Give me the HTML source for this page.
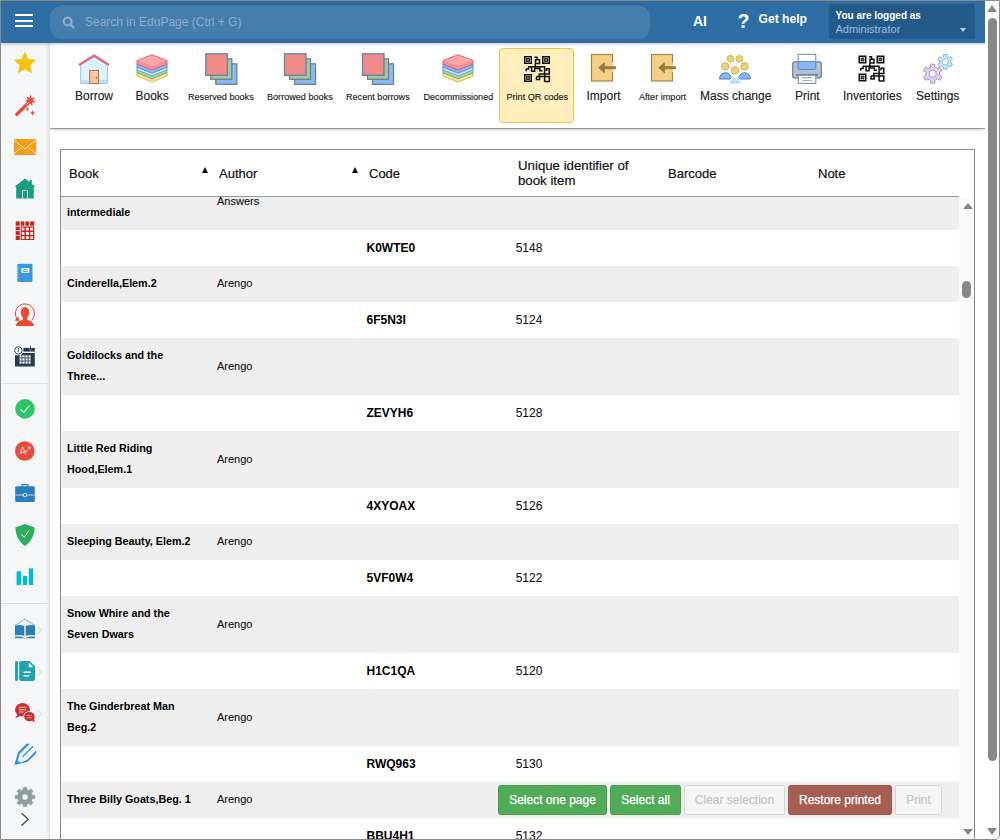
<!DOCTYPE html>
<html><head><meta charset="utf-8">
<style>
*{box-sizing:border-box;margin:0;padding:0}
html,body{width:1000px;height:840px;overflow:hidden;background:#fff;font-family:"Liberation Sans",sans-serif;color:#222}
.a{position:absolute}
#frame{position:absolute;left:0;top:0;width:1000px;height:840px;overflow:hidden;background:#fff}
#bord{position:absolute;left:0;top:0;width:1000px;height:840px;border:1px solid #8a8a8a;border-bottom-right-radius:5px;pointer-events:none;z-index:50}
#hdr{left:1px;top:1px;width:984px;height:42px;background:#2e6ea5;z-index:8;box-shadow:0 1px 3px rgba(0,0,0,.25)}
#search{left:49px;top:4px;width:600px;height:34px;border-radius:12px;background:#457eac;box-shadow:0 -1px 0 rgba(0,0,0,.13)}
#search .ph{position:absolute;left:35px;top:10px;font-size:12px;color:#8cadcc;white-space:nowrap;line-height:14px}
#login{left:828px;top:3px;width:146px;height:35px;border-radius:3px;background:#245a89}
#side{left:1px;top:43px;width:49px;height:800px;background:linear-gradient(to right,#f5f6f8 0,#f5f6f8 44px,#eef0f2 46px,#e6e7ea 48px,#dedfe2 49px);z-index:3}
#tool{left:50px;top:43px;width:935px;height:85px;background:#fff;box-shadow:0 1px 1px rgba(0,0,0,.28),0 1px 4px rgba(0,0,0,.25);z-index:2}
.lbl span{top:0}
.lbl span.s{font-size:9.1px;top:1px}
#vs{left:985px;top:1px;width:14px;height:838px;background:#fff;z-index:9}
#tbl{left:60px;top:149px;width:915px;height:700px;border:1px solid #8a8a8a;border-bottom:none;background:#fff;overflow:hidden}
.th{position:absolute;font-size:13px;color:#111;-webkit-text-stroke:0.2px #111;line-height:15px;white-space:nowrap}
.sort{position:absolute;width:0;height:0;border-left:3.5px solid transparent;border-right:3.5px solid transparent;border-bottom:6px solid #111}
#body{position:absolute;left:0;top:47px;width:898px;height:660px;overflow:hidden}
.row{position:absolute;left:0;width:898px;font-size:11px;color:#111;-webkit-text-stroke:0.1px #111}
.row.g{background:#eeeeee}
.c{position:absolute;white-space:nowrap;line-height:21px}
.bk{font-weight:bold;font-size:10.75px;color:#000;-webkit-text-stroke:0}
.cd{font-weight:bold;font-size:12px;color:#000;-webkit-text-stroke:0}
.ud{font-size:12px;-webkit-text-stroke:0.08px #111}
.btn{position:absolute;top:3px;height:30px;border-radius:2.5px;font-size:12px;line-height:28px;text-align:center;border:1px solid;white-space:nowrap;-webkit-text-stroke:0.25px currentColor}
</style></head><body>
<div id="frame">
 <div id="hdr" class="a">
  <div class="a" style="left:14px;top:13px;width:18px;height:2px;background:#fff"></div>
  <div class="a" style="left:14px;top:19px;width:18px;height:2px;background:#fff"></div>
  <div class="a" style="left:14px;top:24px;width:18px;height:2px;background:#fff"></div>
  <div id="search" class="a">
   <svg class="a" style="left:11.5px;top:10.5px" width="14" height="14" viewBox="0 0 14 14"><circle cx="5.6" cy="5.6" r="3.9" fill="none" stroke="#8cadcc" stroke-width="2.2"/><path d="M8.5 8.5 L11.6 11.6" stroke="#8cadcc" stroke-width="2.4" stroke-linecap="round"/></svg>
   <div class="ph">Search in EduPage (Ctrl + G)</div>
  </div>
  <div class="a" style="left:692px;top:12px;font-size:14px;font-weight:bold;color:#fff;line-height:16px">AI</div>
  <div class="a" style="left:736.5px;top:9.5px;font-size:19.5px;font-weight:bold;color:#fff;line-height:21px">?</div>
  <div class="a" style="left:757.5px;top:11px;font-size:12.1px;font-weight:bold;color:#fff;line-height:14px">Get help</div>
  <div id="login" class="a">
   <div class="a" style="left:6.5px;top:5px;font-size:10px;font-weight:bold;color:#fff;white-space:nowrap;line-height:13px">You are logged as</div>
   <div class="a" style="left:6.5px;top:19px;font-size:11px;color:#9dbde0;white-space:nowrap;line-height:13px">Administrator</div>
   <div class="a" style="left:131px;top:24px;width:0;height:0;border-left:3.8px solid transparent;border-right:3.8px solid transparent;border-top:4.2px solid #c8cdd2"></div>
  </div>
 </div>
 <div id="side" class="a">
  <div class="a" style="left:0;top:340px;width:48px;height:1px;background:#dcdfe3"></div>
  <div class="a" style="left:0;top:560px;width:48px;height:1px;background:#dcdfe3"></div>
 </div>
 <svg class="a" style="left:0;top:0;z-index:6" width="50" height="840" viewBox="0 0 50 840">
  <!-- star -->
  <polygon points="25.0,52.3 28.1,59.3 35.7,60.1 30.0,65.2 31.6,72.7 25.0,68.9 18.4,72.7 20.0,65.2 14.3,60.1 21.9,59.3" fill="#f3c313" stroke="#f3c313" stroke-width="0.6" stroke-linejoin="round"/>
  <!-- wand -->
  <g fill="#e74c3c">
   <path d="M15.6,113.2 L27.6,101.2 L30,103.6 L18,115.6 A1.7,1.7 0 0 1 15.6,113.2 Z"/>
   <polygon points="30.6,94.6 31.6,98 35,97.2 32.8,99.9 35.8,102 32.2,102.4 32.6,106 30.1,103.6 27.6,105.6 28,102.1 24.6,101 27.9,99.5 26.2,96.4 29.5,97.7"/>
   <polygon points="27.4,106.6 28.1,108.5 30.1,109 28.1,109.6 27.4,111.5 26.7,109.6 24.7,109 26.7,108.5"/>
   <polygon points="32.6,110.2 33.4,112.3 35.6,113 33.4,113.7 32.6,115.8 31.8,113.7 29.6,113 31.8,112.3"/>
  </g>
  <path d="M26.6,104.6 L28.8,102.4" stroke="#fff" stroke-width="0.9"/>
  <!-- mail -->
  <rect x="14" y="139" width="22" height="16" fill="#f29e18"/>
  <path d="M14,140 L25,148.8 L36,140 M14,154 L21.5,147.5 M36,154 L28.5,147.5" fill="none" stroke="#fde9c8" stroke-width="1"/>
  <!-- home -->
  <path d="M14.6,186.8 L25,178.6 L29.5,182.1 V179.9 H31.8 V183.9 L35.5,186.8 H33.8 V198.6 H27.9 V190.2 H22.1 V198.6 H16.2 V186.8 Z" fill="#1a9e82"/>
  <rect x="23" y="191" width="4" height="7.6" fill="#1a9e82"/>
  <!-- grid -->
  <g fill="#c1281e">
   <rect x="15.7" y="221.4" width="4.1" height="4.3"/><rect x="20.7" y="221.4" width="3.7" height="4.3"/><rect x="25.3" y="221.4" width="3.8" height="4.3"/><rect x="30" y="221.4" width="4.3" height="4.3"/>
   <rect x="15.7" y="226.6" width="4.1" height="3.6"/><rect x="15.7" y="231.1" width="4.1" height="3.8"/><rect x="15.7" y="235.8" width="4.1" height="4.2"/>
   <path fill-rule="evenodd" d="M20.7,226.6 H34.3 V240 H20.7 Z M21.8,227.7 V230.4 H24.4 V227.7 Z M25.9,227.7 V230.4 H28.9 V227.7 Z M30.3,227.7 V230.4 H33.1 V227.7 Z M21.8,232 V234.9 H24.4 V232 Z M25.9,232 V234.9 H28.9 V232 Z M30.3,232 V234.9 H33.1 V232 Z M21.8,236.3 V239 H24.4 V236.3 Z M25.9,236.3 V239 H28.9 V236.3 Z M30.3,236.3 V239 H33.1 V236.3 Z"/>
  </g>
  <!-- notebook -->
  <rect x="17.2" y="263.7" width="15.3" height="18.2" rx="1.3" fill="#3a98dc"/>
  <rect x="21.4" y="268" width="7.9" height="4.8" fill="#fff"/>
  <rect x="22.8" y="269.2" width="5" height="0.9" fill="#3a98dc"/><rect x="22.8" y="271" width="5" height="0.9" fill="#3a98dc"/>
  <path d="M16.2,267.5 h2 M16.2,270 h2 M16.2,272.5 h2 M16.2,275 h2 M16.2,277.5 h2" stroke="#fff" stroke-width="0.8"/>
  <!-- person -->
  <g fill="#e84a3a">
   <ellipse cx="25" cy="312.4" rx="4.3" ry="5.4"/>
   <rect x="22.9" y="316" width="4.2" height="5"/>
   <path d="M16,325.9 C16.4,322.4 19.5,320.5 23,320.1 H27 C30.5,320.5 33.6,322.4 34,325.9 Z"/>
   <polygon points="14.6,320.4 19.6,320.9 18.3,316.6"/>
  </g>
  <path d="M16.8,318.6 A9.6,9.6 0 1 1 31.6,320.4" fill="none" stroke="#e84a3a" stroke-width="1"/>
  <!-- calendar -->
  <g fill="#263a50">
   <rect x="23.4" y="347.9" width="11.4" height="3.7"/>
   <path d="M15,355.2 H21 L22.6,353.1 H34.8 V366.6 H15 Z"/>
  </g>
  <rect x="19.3" y="355" width="11.6" height="9" fill="#66758a"/>
  <g fill="#fff">
   <rect x="19.6" y="355.5" width="1.7" height="1.7"/><rect x="22.6" y="355.5" width="1.7" height="1.7"/><rect x="25.7" y="355.5" width="1.7" height="1.7"/><rect x="28.8" y="355.5" width="1.7" height="1.7"/>
   <rect x="19.6" y="358.6" width="1.7" height="1.7"/><rect x="22.6" y="358.6" width="1.7" height="1.7"/><rect x="25.7" y="358.6" width="1.7" height="1.7"/><rect x="28.8" y="358.6" width="1.7" height="1.7"/>
   <rect x="19.6" y="361.7" width="1.7" height="1.7"/><rect x="22.6" y="361.7" width="1.7" height="1.7"/><rect x="25.7" y="361.7" width="1.7" height="1.7"/><rect x="28.8" y="361.7" width="1.7" height="1.7"/>
  </g>
  <rect x="29.8" y="346.3" width="1.4" height="4.2" fill="#fff"/>
  <rect x="30" y="346.3" width="1" height="3.8" fill="#263a50"/>
  <circle cx="18.4" cy="350.4" r="4.6" fill="#f4f5f8"/>
  <circle cx="18.4" cy="350.4" r="3.7" fill="#fff" stroke="#263a50" stroke-width="0.9"/>
  <path d="M18.6,347.8 V351.4 H17.4" fill="none" stroke="#263a50" stroke-width="0.8"/>
  <!-- check badge -->
  <circle cx="25" cy="408.9" r="9.8" fill="#2ec46a"/>
  <path d="M20.5,409.5 L23.8,412.5 L29.5,405.5" fill="none" stroke="#e8f8ee" stroke-width="1.1"/>
  <!-- A+ -->
  <circle cx="24.8" cy="451" r="9.8" fill="#e84c3d"/>
  <path d="M20.6,453.6 C21.2,450.5 21.8,448 22.6,446.8 C23.6,448.8 24.6,451.5 25.6,454.4 M20.2,453.2 C22.5,452.3 25,451.4 27.4,450.8 M28.2,448 l2.4,-0.2 M29.3,446.6 l0.2,2.6" fill="none" stroke="#fce4e1" stroke-width="0.95" stroke-linecap="round"/>
  <!-- briefcase -->
  <rect x="15.2" y="486.2" width="19.6" height="15.7" rx="1.2" fill="#2a7fbb"/>
  <path d="M22.2,486.5 V484.6 H27.8 V486.5" fill="none" stroke="#2a7fbb" stroke-width="1.3"/>
  <rect x="15.2" y="494.4" width="19.6" height="1.4" fill="#8ab9dc"/>
  <circle cx="25" cy="495" r="1.8" fill="#2a7fbb" stroke="#fff" stroke-width="0.8"/>
  <!-- shield -->
  <path d="M25,523.9 L34.6,527.5 C34.6,535 31,542 25,545.9 C19,542 15.4,535 15.4,527.5 Z" fill="#2aaf5f"/>
  <path d="M21.2,534.3 L24.4,537.2 L28.8,530.5" fill="none" stroke="#d9f3e2" stroke-width="1"/>
  <!-- chart -->
  <g fill="#00bcd4"><rect x="16.6" y="571.3" width="4.6" height="13.7"/><rect x="22.9" y="575.9" width="4.2" height="9.1"/><rect x="28.8" y="568.4" width="4.4" height="16.6"/></g>
  <!-- book -->
  <path d="M14.8,625.5 L24.9,619.2 L35,625.5" fill="none" stroke="#2a7fbb" stroke-width="0.9" stroke-dasharray="1.2,0.6"/>
  <path d="M15,625.5 C18,624.6 21.5,624.6 24.2,626 V636 C21.5,634.8 18,634.8 15,635.5 Z M25.6,626 C28.5,624.6 32,624.6 35,625.5 V635.5 C32,634.8 28.5,634.8 25.6,636 Z" fill="#2a7fbb"/>
  <path d="M15,636.8 C18,636 22,636.3 25,638.3 C28,636.3 32,636 35,636.8 V638.3 H15 Z" fill="#2a7fbb"/>
  <path d="M37.5,626.3 L41.5,630 L37.5,633.7" fill="none" stroke="#d3d3d3" stroke-width="0.9"/>
  <!-- doc -->
  <rect x="15.1" y="661" width="2.8" height="19.9" rx="1.2" fill="#20a3ad"/>
  <path d="M21,661 H29.7 L35.1,666.4 V679.1 A1.8,1.8 0 0 1 33.3,680.9 H21 A1.8,1.8 0 0 1 19.2,679.1 V662.8 A1.8,1.8 0 0 1 21,661 Z" fill="#20a3ad"/>
  <path d="M28.8,662.5 L33.2,667.2 H28.8 Z" fill="#fff"/>
  <rect x="23.3" y="671.5" width="7.8" height="1.5" rx="0.7" fill="#fff"/><rect x="23.3" y="675" width="6" height="1.5" rx="0.7" fill="#fff"/>
  <path d="M37.5,668.3 L41.5,672 L37.5,675.7" fill="none" stroke="#d3d3d3" stroke-width="0.9"/>
  <!-- chat -->
  <g fill="#c9302c">
   <ellipse cx="22.5" cy="709.8" rx="7.5" ry="6.7"/>
   <polygon points="15,718.2 18.6,713.6 21.6,715.6"/>
  </g>
  <ellipse cx="29.4" cy="716.6" rx="6.2" ry="5.5" fill="#f5f6f8"/>
  <g fill="#c9302c">
   <ellipse cx="29.4" cy="716.6" rx="5.3" ry="4.7"/>
   <polygon points="34.6,722.6 30.8,719.6 33.6,717.4"/>
  </g>
  <path d="M19,707.3 h7.3 M19,709.7 h7.3 M19,712 h4.6" stroke="#f0c9c7" stroke-width="1"/>
  <path d="M26.5,715.5 h5.6 M26.5,717.8 h5.6" stroke="#e2908c" stroke-width="0.9"/>
  <path d="M37.5,710.3 L41.5,714 L37.5,717.7" fill="none" stroke="#d3d3d3" stroke-width="0.9"/>
  <!-- pencil -->
  <path d="M14.2,765.1 L18.2,752 L26.5,743.7 H30 L19.8,754 L17.8,760.8 L20.3,762.6 L27,760 L36.1,750.2 V753.6 L27.5,762 Z" fill="#3a95dc"/>
  <path d="M22.6,756.8 L33.2,746.2" stroke="#3a95dc" stroke-width="1.4"/>
  <!-- gear -->
  <path fill="#8d9c9c" fill-rule="evenodd" stroke="#8d9c9c" stroke-width="0.4" stroke-linejoin="round" d="M23.20,789.62 L23.24,787.16 L26.76,787.16 L26.80,789.62 L28.95,790.50 L30.72,788.80 L33.20,791.28 L31.50,793.05 L32.38,795.20 L34.84,795.24 L34.84,798.76 L32.38,798.80 L31.50,800.95 L33.20,802.72 L30.72,805.20 L28.95,803.50 L26.80,804.38 L26.76,806.84 L23.24,806.84 L23.20,804.38 L21.05,803.50 L19.28,805.20 L16.80,802.72 L18.50,800.95 L17.62,798.80 L15.16,798.76 L15.16,795.24 L17.62,795.20 L18.50,793.05 L16.80,791.28 L19.28,788.80 L21.05,790.50 Z M28.00,797.00 a3.00,3.00 0 1 0 -6.00,0 a3.00,3.00 0 1 0 6.00,0 Z"/>
  <path d="M21.5,813.2 L28.3,819.3 L21.5,825.5" fill="none" stroke="#333" stroke-width="1.1"/>
 </svg>
 <div id="tool" class="a">
  <div class="a" style="left:449px;top:5px;width:75px;height:75px;border:1px solid #efc04a;border-radius:4px;background:#fdeebb"></div>
 </div>
 <svg class="a" style="left:0;top:0;z-index:6" width="1000" height="130" viewBox="0 0 1000 130">
  <defs>
   <g id="stack">
    <polygon points="137,72.5 152,66.8 167,72.5 167,76 152,82 137,76" fill="#fde68e" stroke="#d8b44a" stroke-width="1"/>
    <polygon points="137,69.3 152,63.6 167,69.3 167,72.8 152,78.8 137,72.8" fill="#a9d7a7" stroke="#6fa870" stroke-width="1"/>
    <polygon points="137,66.5 152,60.8 167,66.5 167,70 152,76 137,70" fill="#bfe6fd" stroke="#6d9fdc" stroke-width="1"/>
    <polygon points="137,63.6 152,57.9 167,63.6 167,67.1 152,73.1 137,67.1" fill="#87b6f2" stroke="#5f8fd8" stroke-width="1"/>
    <polygon points="137,60.5 152,54.8 167,60.5 167,64 152,70 137,64" fill="#f58f96" stroke="#d9646d" stroke-width="1"/>
    <polygon points="137.8,60.5 152,55.5 166.2,60.5 152,66" fill="#f9a7ab"/>
   </g>
   <g id="squares">
    <rect x="215.8" y="63.8" width="21" height="20.5" fill="#8cb9f4" stroke="#6b8197" stroke-width="1.3"/>
    <rect x="210.8" y="58.8" width="21" height="20.5" fill="#a0c99b" stroke="#6b8197" stroke-width="1.3"/>
    <rect x="205.8" y="53.8" width="21.5" height="21.5" fill="#f08b8b" stroke="#6b8197" stroke-width="1.3"/>
   </g>
   <g id="qr" fill="none" stroke="#111" stroke-width="1.7">
    <rect x="524.75" y="56.75" width="6.5" height="6.5" stroke-width="1.5"/><rect x="526.60" y="58.60" width="2.8" height="2.8" fill="#7a7a7a" stroke-width="0.9"/>
    <rect x="542.75" y="56.75" width="6.5" height="6.5" stroke-width="1.5"/><rect x="544.60" y="58.60" width="2.8" height="2.8" fill="#7a7a7a" stroke-width="0.9"/>
    <rect x="524.75" y="74.75" width="6.5" height="6.5" stroke-width="1.5"/><rect x="526.60" y="76.60" width="2.8" height="2.8" fill="#7a7a7a" stroke-width="0.9"/>
    <path stroke-width="1.5" d="M534.5,57.3 h2.5 v2 M535.5,59.8 h4 v3.6 h-4 z M535.3,63.4 v3.3 M528.1,66.7 h16.5 v15 M526.2,71.2 v-2.2 h2.4 v-2.3 M531.5,66.7 v4.5 h3.1 v-4.5 M535.2,66.7 v1.7 h4.7 v2.4 h2.6 M546.5,71 v-2.3 h2.8 v5.2 h-10 v2.5 M536.5,76.4 h12.8 v5 h-4.7 M536.5,76.4 v3.2 h3.1 v-3.2"/>
   </g>
   <g id="imp">
    <rect x="591.5" y="54.5" width="21" height="26.5" fill="#f5cf86" stroke="#a0803f" stroke-width="1.1"/>
    <rect x="611.9" y="62.5" width="1.2" height="10" fill="#f5cf86"/>
    <polygon points="598.2,67.7 604.8,61.9 604.8,73.4" fill="#957a40"/>
    <rect x="603.5" y="66.2" width="12.4" height="3" fill="#957a40"/>
   </g>
  </defs>
  <!-- Borrow -->
  <polygon points="80.7,64.2 94,56.3 107.3,64.2 107.3,83.5 80.7,83.5" fill="#dcf2fd" stroke="#a3c1e6" stroke-width="1"/>
  <rect x="81.2" y="80" width="25.6" height="3" fill="#bde0f6"/>
  <polyline points="79,65 94,55.7 109,65" fill="none" stroke="#e06a74" stroke-width="2.3"/>
  <rect x="89.7" y="70.5" width="8.8" height="13" fill="#ffc59a" stroke="#a9744f" stroke-width="1"/>
  <circle cx="96.3" cy="77.8" r="0.7" fill="#7a4a2a"/>
  <!-- Books -->
  <use href="#stack"/>
  <use href="#squares"/>
  <use href="#squares" transform="translate(78.7,0)"/>
  <use href="#squares" transform="translate(156.7,0)"/>
  <use href="#stack" transform="translate(306,0)"/>
  <use href="#qr"/>
  <use href="#imp"/>
  <use href="#imp" transform="translate(60,0)"/>
  <!-- Mass change -->
  <g stroke="#c8a94a" stroke-width="0.8" fill="#ead27a">
   <circle cx="730.5" cy="58.8" r="3.4"/><circle cx="739.4" cy="58.8" r="3.4"/>
   <circle cx="725.2" cy="66.4" r="3.8"/><circle cx="744.5" cy="66.4" r="3.8"/>
   <circle cx="735" cy="70.5" r="3.8"/>
  </g>
  <path d="M719.5,79 a5.9,6.3 0 0 1 11.8,0 z" fill="#8ab5ee" stroke="#4f7fc8" stroke-width="1"/>
  <path d="M738.7,79 a5.9,6.3 0 0 1 11.8,0 z" fill="#8ab5ee" stroke="#4f7fc8" stroke-width="1"/>
  <path d="M729.3,82.8 a5.7,5.8 0 0 1 11.4,0 z" fill="#c0e6fd" stroke="#fff" stroke-width="1"/>
  <path d="M729.5,82.8 h11" stroke="#9fc4e6" stroke-width="1"/>
  <!-- Print -->
  <rect x="798.2" y="54.3" width="17.6" height="8" fill="#fff" stroke="#74879a" stroke-width="1"/>
  <rect x="792.7" y="61.8" width="28.6" height="16" rx="2" fill="#b1c1d4" stroke="#6d8095" stroke-width="1.2"/>
  <rect x="798.2" y="61.5" width="17.6" height="8" rx="1" fill="#8ab6f0" stroke="#5d87c8" stroke-width="1"/>
  <circle cx="818.7" cy="65.7" r="0.9" fill="#f6dc6a"/>
  <rect x="796" y="74" width="22" height="2" rx="1" fill="#6d8095"/>
  <rect x="798.2" y="75.2" width="17.6" height="8.2" fill="#fff" stroke="#74879a" stroke-width="1"/>
  <rect x="802" y="77" width="10" height="1.3" fill="#a3b2c0"/><rect x="802" y="80" width="10" height="1" fill="#a3b2c0"/>
  <use href="#qr" transform="translate(334.5,-0.5)"/>
  <!-- Settings -->
  <path fill="#ddd2f1" stroke="#a48ac6" stroke-width="0.9" stroke-linejoin="round" fill-rule="evenodd" d="M930.61,67.02 L930.58,64.23 L934.82,64.23 L934.79,67.02 L937.44,68.55 L939.84,67.13 L941.96,70.80 L939.53,72.17 L939.53,75.23 L941.96,76.60 L939.84,80.27 L937.44,78.85 L934.79,80.38 L934.82,83.17 L930.58,83.17 L930.61,80.38 L927.96,78.85 L925.56,80.27 L923.44,76.60 L925.87,75.23 L925.87,72.17 L923.44,70.80 L925.56,67.13 L927.96,68.55 Z M936.30,73.70 a3.60,3.60 0 1 0 -7.20,0 a3.60,3.60 0 1 0 7.20,0 Z"/>
  <path fill="#c9e7fb" stroke="#80b2d9" stroke-width="0.9" stroke-linejoin="round" fill-rule="evenodd" d="M943.56,56.55 L943.54,54.38 L946.86,54.38 L946.84,56.55 L948.92,57.75 L950.79,56.66 L952.45,59.53 L950.57,60.60 L950.57,63.00 L952.45,64.07 L950.79,66.94 L948.92,65.85 L946.84,67.05 L946.86,69.22 L943.54,69.22 L943.56,67.05 L941.48,65.85 L939.61,66.94 L937.95,64.07 L939.83,63.00 L939.83,60.60 L937.95,59.53 L939.61,56.66 L941.48,57.75 Z M948.40,61.80 a3.20,3.20 0 1 0 -6.40,0 a3.20,3.20 0 1 0 6.40,0 Z"/>
 </svg>
 <div class="a lbl" style="left:0;top:88.5px;width:1000px;height:16px;z-index:7;font-size:12px;color:#222;-webkit-text-stroke:0.15px #222;white-space:nowrap;line-height:14px">
  <span class="a" style="left:75px">Borrow</span>
  <span class="a" style="left:135.5px">Books</span>
  <span class="a s" style="left:188px">Reserved books</span>
  <span class="a s" style="left:267px">Borrowed books</span>
  <span class="a s" style="left:346px">Recent borrows</span>
  <span class="a s" style="left:423.5px">Decommissioned</span>
  <span class="a s" style="left:506.5px">Print QR codes</span>
  <span class="a" style="left:586.5px">Import</span>
  <span class="a s" style="left:639px">After import</span>
  <span class="a" style="left:700px">Mass change</span>
  <span class="a" style="left:795px">Print</span>
  <span class="a" style="left:843px">Inventories</span>
  <span class="a" style="left:916px">Settings</span>
 </div>
 <div id="tbl" class="a">
  <div class="th" style="left:8px;top:16px">Book</div>
  <div class="sort" style="left:141px;top:17px"></div>
  <div class="th" style="left:158px;top:16px">Author</div>
  <div class="sort" style="left:291px;top:17px"></div>
  <div class="th" style="left:308px;top:16px">Code</div>
  <div class="th" style="left:457px;top:8px;font-size:13.25px">Unique identifier of<br>book item</div>
  <div class="th" style="left:607px;top:16px">Barcode</div>
  <div class="th" style="left:757px;top:16px">Note</div>
  <div class="a" style="left:0;top:46px;width:898px;height:1px;background:#8d9db0"></div>
  <div id="body">
<div class="row g" style="top:-24px;height:57px"><div class="c bk" style="left:6px;top:7.8px">xxx<br>intermediale</div><div class="c au" style="left:156px;top:17.5px">Answers</div></div>
<div class="row" style="top:33px;height:36px"><div class="c cd" style="left:305.5px;top:7.6px">K0WTE0</div><div class="c ud" style="left:454.7px;top:7.6px">5148</div></div>
<div class="row g" style="top:69px;height:36px"><div class="c bk" style="left:6px;top:6.8px">Cinderella,Elem.2</div><div class="c au" style="left:156px;top:7.1px">Arengo</div></div>
<div class="row" style="top:105px;height:36px"><div class="c cd" style="left:305.5px;top:7.6px">6F5N3I</div><div class="c ud" style="left:454.7px;top:7.6px">5124</div></div>
<div class="row g" style="top:141px;height:57px"><div class="c bk" style="left:6px;top:6.8px">Goldilocks and the<br>Three...</div><div class="c au" style="left:156px;top:17.6px">Arengo</div></div>
<div class="row" style="top:198px;height:36px"><div class="c cd" style="left:305.5px;top:7.6px">ZEVYH6</div><div class="c ud" style="left:454.7px;top:7.6px">5128</div></div>
<div class="row g" style="top:234px;height:57px"><div class="c bk" style="left:6px;top:6.8px">Little Red Riding<br>Hood,Elem.1</div><div class="c au" style="left:156px;top:17.6px">Arengo</div></div>
<div class="row" style="top:291px;height:36px"><div class="c cd" style="left:305.5px;top:7.6px">4XYOAX</div><div class="c ud" style="left:454.7px;top:7.6px">5126</div></div>
<div class="row g" style="top:327px;height:36px"><div class="c bk" style="left:6px;top:6.8px">Sleeping Beauty, Elem.2</div><div class="c au" style="left:156px;top:7.1px">Arengo</div></div>
<div class="row" style="top:363px;height:36px"><div class="c cd" style="left:305.5px;top:7.6px">5VF0W4</div><div class="c ud" style="left:454.7px;top:7.6px">5122</div></div>
<div class="row g" style="top:399px;height:57px"><div class="c bk" style="left:6px;top:6.8px">Snow Whire and the<br>Seven Dwars</div><div class="c au" style="left:156px;top:17.6px">Arengo</div></div>
<div class="row" style="top:456px;height:36px"><div class="c cd" style="left:305.5px;top:7.6px">H1C1QA</div><div class="c ud" style="left:454.7px;top:7.6px">5120</div></div>
<div class="row g" style="top:492px;height:57px"><div class="c bk" style="left:6px;top:6.8px">The Ginderbreat Man<br>Beg.2</div><div class="c au" style="left:156px;top:17.6px">Arengo</div></div>
<div class="row" style="top:549px;height:36px"><div class="c cd" style="left:305.5px;top:7.6px">RWQ963</div><div class="c ud" style="left:454.7px;top:7.6px">5130</div></div>
<div class="row g" style="top:585px;height:36px"><div class="c bk" style="left:6px;top:6.8px">Three Billy Goats,Beg. 1</div><div class="c au" style="left:156px;top:7.1px">Arengo</div></div>
<div class="row" style="top:621px;height:36px"><div class="c cd" style="left:305.5px;top:7.6px">BBU4H1</div><div class="c ud" style="left:454.7px;top:7.6px">5132</div></div>
  </div>
  <div class="a" style="left:898px;top:47px;width:16px;height:660px;background:#fafafa"></div>
  <div class="a" style="left:901.5px;top:53px;width:0;height:0;border-left:5px solid transparent;border-right:5px solid transparent;border-bottom:6.5px solid #888"></div>
  <div class="a" style="left:901px;top:131px;width:9px;height:17px;border-radius:4.5px;background:#888"></div>
  <div class="a" style="left:901.5px;top:678.5px;width:0;height:0;border-left:5px solid transparent;border-right:5px solid transparent;border-top:6.5px solid #888"></div>
  <div class="a" style="left:437px;top:632px;width:461px;height:36px">
   <div class="btn" style="left:0;width:109px;background:#52ab56;border-color:#479f4b;color:#fff">Select one page</div>
   <div class="btn" style="left:112px;width:71px;background:#52ab56;border-color:#479f4b;color:#fff">Select all</div>
   <div class="btn" style="left:186px;width:101px;background:#f5f5f5;border-color:#d5d5d5;color:#c2c2c2;-webkit-text-stroke:0.1px #c2c2c2">Clear selection</div>
   <div class="btn" style="left:290px;width:104px;background:#a65e52;border-color:#9c564b;color:#fff">Restore printed</div>
   <div class="btn" style="left:397px;width:47px;background:#f5f5f5;border-color:#d5d5d5;color:#c2c2c2;-webkit-text-stroke:0.1px #c2c2c2">Print</div>
  </div>
 </div>
 <div id="vs" class="a">
  <div class="a" style="left:2px;top:4px;width:0;height:0;border-left:5px solid transparent;border-right:5px solid transparent;border-bottom:7px solid #888"></div>
  <div class="a" style="left:3px;top:17px;width:9px;height:743px;border-radius:5px;background:#888"></div>
  <div class="a" style="left:2px;top:827px;width:0;height:0;border-left:5px solid transparent;border-right:5px solid transparent;border-top:7px solid #888"></div>
 </div>

 <div id="bord"></div>
</div>
</body></html>
